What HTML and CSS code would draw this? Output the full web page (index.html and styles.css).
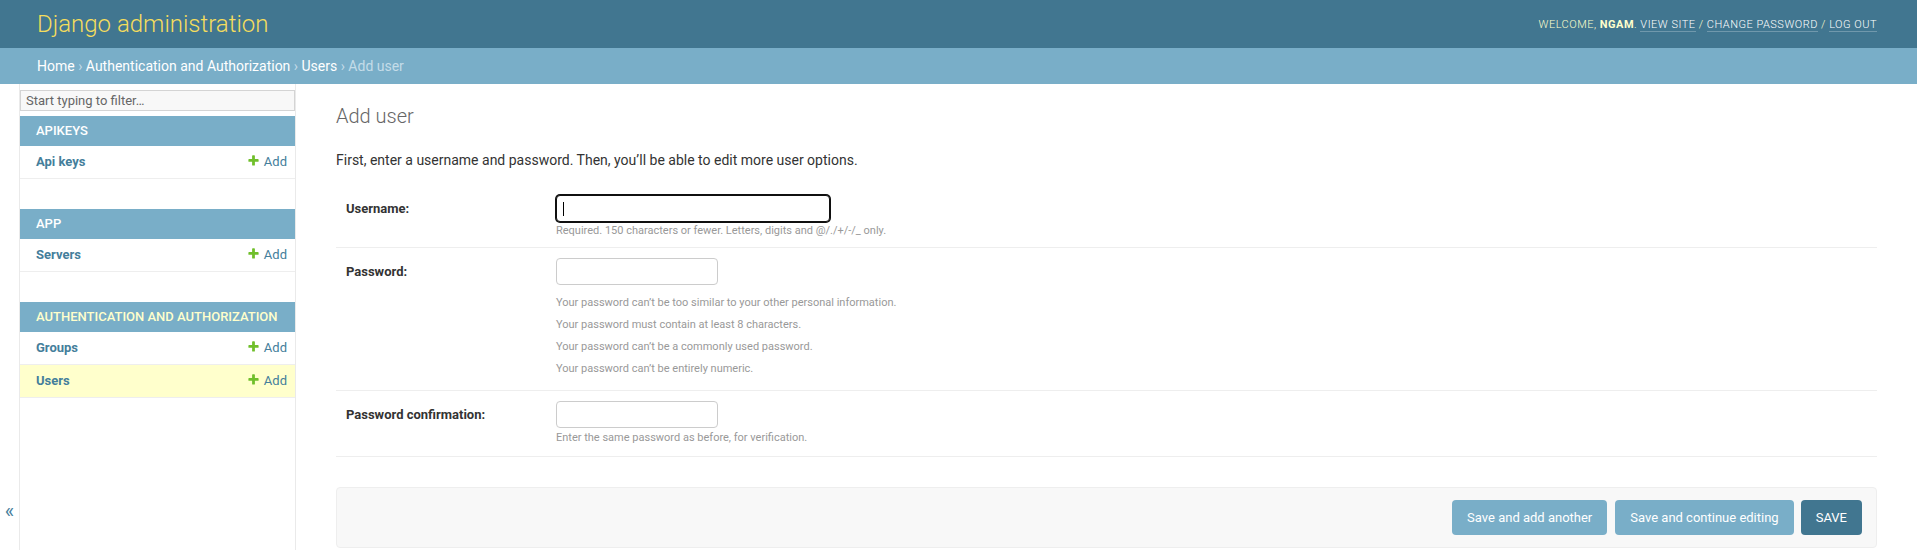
FILE: index.html
```html
<!DOCTYPE html>
<html lang="en">
<head>
<meta charset="utf-8">
<title>Add user | Django site admin</title>
<link rel="stylesheet" href="styles.css">
</head>
<body>
<div class="container">
  <header class="header">
    <div class="branding"><h1 class="site-name"><a href="#">Django administration</a></h1></div>
    <div class="user-tools">Welcome, <strong>ngam</strong>. <a href="#">View site</a> / <a href="#">Change password</a> / <a href="#">Log out</a></div>
  </header>
  <div class="breadcrumbs"><a href="#">Home</a> &rsaquo; <a href="#">Authentication and Authorization</a> &rsaquo; <a href="#">Users</a> &rsaquo; Add user</div>
  <div class="main">
    <button class="toggle-nav" type="button" aria-label="Toggle navigation">&laquo;</button>
    <nav class="sidebar">
      <input class="nav-filter" type="search" placeholder="Start typing to filter…">
      <div class="module">
        <table>
          <caption><a class="section" href="#">Apikeys</a></caption>
          <tr><th><a href="#">Api keys</a></th><td><a class="addlink" href="#"><svg class="plus" width="13" height="13" viewBox="0 0 1792 1792"><path fill="#70bf2b" d="M1600 796v192q0 40-28 68t-68 28h-416v416q0 40-28 68t-68 28h-192q-40 0-68-28t-28-68v-416h-416q-40 0-68-28t-28-68v-192q0-40 28-68t68-28h416v-416q0-40 28-68t68-28h192q40 0 68 28t28 68v416h416q40 0 68 28t28 68z"/></svg>Add</a></td></tr>
        </table>
      </div>
      <div class="module">
        <table>
          <caption><a class="section" href="#">App</a></caption>
          <tr><th><a href="#">Servers</a></th><td><a class="addlink" href="#"><svg class="plus" width="13" height="13" viewBox="0 0 1792 1792"><path fill="#70bf2b" d="M1600 796v192q0 40-28 68t-68 28h-416v416q0 40-28 68t-68 28h-192q-40 0-68-28t-28-68v-416h-416q-40 0-68-28t-28-68v-192q0-40 28-68t68-28h416v-416q0-40 28-68t68-28h192q40 0 68 28t28 68v416h416q40 0 68 28t28 68z"/></svg>Add</a></td></tr>
        </table>
      </div>
      <div class="module current-app">
        <table>
          <caption><a class="section" href="#">Authentication and Authorization</a></caption>
          <tr><th><a href="#">Groups</a></th><td><a class="addlink" href="#"><svg class="plus" width="13" height="13" viewBox="0 0 1792 1792"><path fill="#70bf2b" d="M1600 796v192q0 40-28 68t-68 28h-416v416q0 40-28 68t-68 28h-192q-40 0-68-28t-28-68v-416h-416q-40 0-68-28t-28-68v-192q0-40 28-68t68-28h416v-416q0-40 28-68t68-28h192q40 0 68 28t28 68v416h416q40 0 68 28t28 68z"/></svg>Add</a></td></tr>
          <tr class="current-model"><th><a href="#">Users</a></th><td><a class="addlink" href="#"><svg class="plus" width="13" height="13" viewBox="0 0 1792 1792"><path fill="#70bf2b" d="M1600 796v192q0 40-28 68t-68 28h-416v416q0 40-28 68t-68 28h-192q-40 0-68-28t-28-68v-416h-416q-40 0-68-28t-28-68v-192q0-40 28-68t68-28h416v-416q0-40 28-68t68-28h192q40 0 68 28t28 68v416h416q40 0 68 28t28 68z"/></svg>Add</a></td></tr>
        </table>
      </div>
    </nav>
    <div class="content">
      <h1 class="page-title">Add user</h1>
      <form class="user-form">
        <p class="intro">First, enter a username and password. Then, you’ll be able to edit more user options.</p>
        <fieldset class="fields">
          <div class="form-row">
            <label class="field-label">Username:</label>
            <input class="text-input wide-input focused" type="text">
            <div class="help help-tight">Required. 150 characters or fewer. Letters, digits and @/./+/-/_ only.</div>
          </div>
          <div class="form-row">
            <label class="field-label">Password:</label>
            <input class="text-input short-input" type="password">
            <ul class="help help-list">
              <li>Your password can’t be too similar to your other personal information.</li>
              <li>Your password must contain at least 8 characters.</li>
              <li>Your password can’t be a commonly used password.</li>
              <li>Your password can’t be entirely numeric.</li>
            </ul>
          </div>
          <div class="form-row">
            <label class="field-label">Password confirmation:</label>
            <input class="text-input short-input" type="password">
            <div class="help help-loose">Enter the same password as before, for verification.</div>
          </div>
        </fieldset>
        <div class="submit-row">
          <button class="btn" type="button">Save and add another</button>
          <button class="btn" type="button">Save and continue editing</button>
          <button class="btn btn-default" type="button">Save</button>
        </div>
      </form>
    </div>
  </div>
</div>
</body>
</html>
```
FILE: styles.css
```css
html, body {
  margin: 0;
  padding: 0;
}
body {
  font-family: Roboto, "Liberation Sans", Arial, sans-serif;
  font-size: 14px;
  color: #333;
  background: #fff;
  overflow: hidden;
}
a {
  text-decoration: none;
}
.container {
  display: flex;
  flex-direction: column;
  min-height: 100vh;
}

/* header */
.header {
  display: flex;
  justify-content: space-between;
  align-items: center;
  padding: 10px 40px 10px 37px;
  background: #417690;
  color: #ffc;
}
.site-name {
  margin: 0 20px 0 0;
  padding: 0;
  font-size: 24px;
  font-weight: 300;
}
.site-name a {
  color: #f5dd5d;
}
.user-tools {
  font-size: 11px;
  font-weight: 300;
  letter-spacing: 0.5px;
  text-transform: uppercase;
  text-align: right;
  color: #ffc;
}
.user-tools strong {
  font-weight: 700;
}
.user-tools a {
  color: #fff;
  border-bottom: 1px solid rgba(255, 255, 255, 0.25);
}

/* breadcrumbs */
.breadcrumbs {
  background: #79aec8;
  padding: 10px 40px 10px 37px;
  font-size: 14px;
  color: #c4dce8;
}
.breadcrumbs a {
  color: #fff;
}

/* main */
.main {
  flex: 1;
  display: flex;
}
.toggle-nav {
  flex: 0 0 20px;
  width: 20px;
  box-sizing: border-box;
  border: 0;
  border-right: 1px solid #eaeaea;
  background: #fff;
  color: #447e9b;
  font-family: Roboto, "Liberation Sans", Arial, sans-serif;
  font-size: 20px;
  padding: 0 0 45px 0;
  display: flex;
  align-items: flex-end;
  justify-content: center;
  cursor: pointer;
}
.sidebar {
  flex: 0 0 275px;
  border-right: 1px solid #eaeaea;
  background: #fff;
}
.nav-filter {
  display: block;
  width: 100%;
  box-sizing: border-box;
  margin: 6px 0 5px;
  padding: 2px 5px;
  border: 1px solid #d4d4d4;
  background: #f8f8f8;
  color: #333;
  font-family: Roboto, "Liberation Sans", Arial, sans-serif;
  font-size: 13px;
  outline: none;
  -webkit-appearance: none;
  appearance: none;
  border-radius: 0;
}
.nav-filter::placeholder {
  color: #666;
}
.module {
  margin-bottom: 30px;
}
.module table {
  width: 100%;
  border-collapse: collapse;
}
.module caption {
  caption-side: top;
  text-align: left;
  padding: 8px 8px 8px 16px;
  background: #79aec8;
  font-size: 13px;
  line-height: 14px;
  font-weight: 500;
  text-transform: uppercase;
}
.section {
  color: #fff;
}
.current-app .section {
  color: #ffc;
}
.module th, .module td {
  font-size: 13px;
  line-height: 16px;
  height: 16px;
  padding: 8px;
  border-bottom: 1px solid #eee;
  vertical-align: top;
}
.module th {
  width: 100%;
  text-align: left;
  font-weight: 700;
  padding-left: 16px;
}
.module td {
  white-space: nowrap;
}
.module th a, .module td a {
  color: #447e9b;
}
.addlink {
  display: inline;
}
.plus {
  vertical-align: -1px;
  margin-right: 4px;
}
.current-model th, .current-model td {
  background: #ffc;
}

/* content */
.content {
  flex: 1;
  min-width: 0;
  padding: 20px 40px;
}
.page-title {
  margin: 0 0 24px;
  font-size: 20px;
  font-weight: 300;
  color: #666;
}
.intro {
  margin: 0 0 17px;
  font-size: 14px;
}
.fields {
  margin: 0 0 30px;
  padding: 0;
  border: none;
  min-width: 0;
}
.form-row {
  display: grid;
  grid-template-columns: 210px 1fr;
  padding: 10px;
  border-bottom: 1px solid #eee;
  font-size: 13px;
}
.field-label {
  grid-row: 1 / span 2;
  padding: 7px 10px 0 0;
  line-height: 1;
  font-weight: 700;
  color: #333;
}
.text-input {
  grid-column: 2;
  justify-self: start;
  margin: 0 0 2px;
  padding: 5px 6px;
  border: 1px solid #ccc;
  border-radius: 4px;
  font-family: Roboto, "Liberation Sans", Arial, sans-serif;
  font-size: 13px;
  color: #333;
  background: #fff;
  outline: none;
}
.wide-input {
  width: 260px;
}
.short-input {
  width: 148px;
}
.focused {
  border-color: #101010;
  box-shadow: 0 0 0 1px #101010;
  background: linear-gradient(#000, #000) no-repeat 6px 50% / 1px 14px, #fff;
}
.help {
  grid-column: 2;
  margin: 0;
  padding: 0;
  font-size: 11px;
  line-height: 14px;
  color: #999;
}
.help-tight {
  line-height: 13px;
}
.help-loose {
  padding: 1px 0 1px;
}
.help-list {
  list-style: none;
  padding: 5px 0 0;
  margin: 0;
}
.help-list li {
  padding: 4px 0;
  line-height: 14px;
}

/* submit row */
.submit-row {
  display: flex;
  justify-content: flex-end;
  padding: 12px 14px;
  background: #f8f8f8;
  border: 1px solid #eee;
  border-radius: 4px;
}
.btn {
  height: 35px;
  line-height: 15px;
  margin-left: 8px;
  padding: 10px 15px;
  border: none;
  border-radius: 4px;
  background: #79aec8;
  color: #fff;
  font-family: Roboto, "Liberation Sans", Arial, sans-serif;
  font-size: 13px;
  cursor: pointer;
}
.btn-default {
  background: #417690;
  text-transform: uppercase;
  margin-left: 7px;
}
```
